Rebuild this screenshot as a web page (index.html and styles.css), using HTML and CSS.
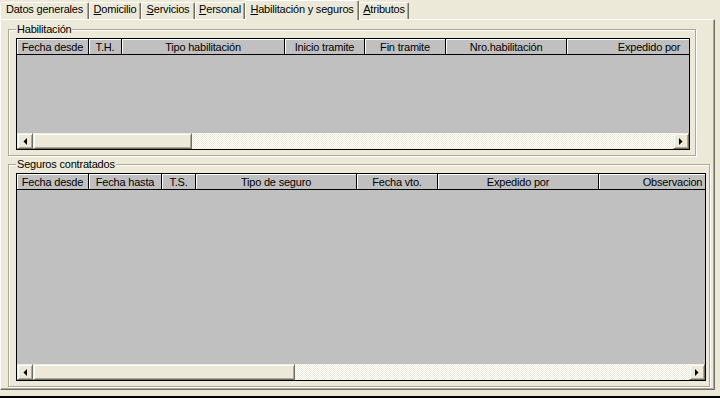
FILE: index.html
```html
<!DOCTYPE html>
<html lang="es">
<head>
    <meta charset="UTF-8">
    <title>Habilitación y seguros</title>
    <link rel="stylesheet" href="styles.css">
</head>
<body>
    <div class="window">
        <div class="tabs">
            <div class="tab tab-datos">Datos <u>g</u>enerales</div>
            <div class="tab tab-domicilio"><u>D</u>omicilio</div>
            <div class="tab tab-servicios"><u>S</u>ervicios</div>
            <div class="tab tab-personal"><u>P</u>ersonal</div>
            <div class="tab tab-habilitacion active"><u>H</u>abilitación y seguros</div>
            <div class="tab tab-atributos"><u>A</u>tributos</div>
        </div>

        <div class="panel">
            <!-- Habilitación -->
            <fieldset class="group group-hab">
                <legend>Habilitación</legend>
                <div class="grid grid-hab">
                    <div class="grid-head">
                        <div class="col">Fecha desde</div>
                        <div class="col">T.H.</div>
                        <div class="col">Tipo habilitación</div>
                        <div class="col">Inicio tramite</div>
                        <div class="col">Fin tramite</div>
                        <div class="col">Nro.habilitación</div>
                        <div class="col">Expedido por</div>
                    </div>
                    <div class="grid-body"></div>
                    <div class="hscroll">
                        <div class="sb-btn">
                            <svg width="4" height="7" viewBox="0 0 4 7"><polygon points="4,0 4,7 0.5,3.5" fill="#000"/></svg>
                        </div>
                        <div class="sb-thumb"></div>
                        <div class="sb-track"></div>
                        <div class="sb-btn">
                            <svg width="4" height="7" viewBox="0 0 4 7"><polygon points="0,0 0,7 3.5,3.5" fill="#000"/></svg>
                        </div>
                    </div>
                </div>
            </fieldset>

            <!-- Seguros contratados -->
            <fieldset class="group group-seg">
                <legend>Seguros contratados</legend>
                <div class="grid grid-seg">
                    <div class="grid-head">
                        <div class="col">Fecha desde</div>
                        <div class="col">Fecha hasta</div>
                        <div class="col">T.S.</div>
                        <div class="col">Tipo de seguro</div>
                        <div class="col">Fecha vto.</div>
                        <div class="col">Expedido por</div>
                        <div class="col">Observacion</div>
                    </div>
                    <div class="grid-body"></div>
                    <div class="hscroll">
                        <div class="sb-btn">
                            <svg width="4" height="7" viewBox="0 0 4 7"><polygon points="4,0 4,7 0.5,3.5" fill="#000"/></svg>
                        </div>
                        <div class="sb-thumb"></div>
                        <div class="sb-track"></div>
                        <div class="sb-btn">
                            <svg width="4" height="7" viewBox="0 0 4 7"><polygon points="0,0 0,7 3.5,3.5" fill="#000"/></svg>
                        </div>
                    </div>
                </div>
            </fieldset>
        </div>
    </div>
</body>
</html>
```

FILE: styles.css
```css
body {
    margin: 0;
    background-color: #ece9d8;
    font-family: "Liberation Sans", Arial, sans-serif;
    font-size: 11px;
    letter-spacing: -0.2px;
    color: #000;
}

.window {
    width: 720px;
    height: 398px;
    box-sizing: border-box;
    border-bottom: 2px solid #000;
    overflow: hidden;
}

/* tab strip */
.tabs {
    display: flex;
    align-items: flex-end;
    height: 19px;
    position: relative;
    z-index: 1;
}

.tab {
    box-sizing: border-box;
    height: 17px;
    line-height: 13px;
    text-align: center;
    white-space: nowrap;
    background-color: #ece9d8;
    border-top: 1px solid #fff;
    border-left: 1px solid #fff;
    border-right: 1px solid #716f64;
    box-shadow: inset -1px 0 0 #aca899;
    border-radius: 2px 2px 0 0;
}

.tab.active {
    height: 20px;
    margin-bottom: -1px;
    padding-top: 2px;
}

.tab-datos { width: 89px; }
.tab-domicilio { width: 52px; }
.tab-servicios { width: 54px; }
.tab-personal { width: 50px; }
.tab-habilitacion { width: 114px; }
.tab-atributos { width: 50px; }

/* tab page */
.panel {
    box-sizing: border-box;
    width: 715px;
    height: 371px;
    padding: 2px 0 0 7px;
    border-top: 1px solid #fff;
    border-left: 1px solid #fff;
    border-right: 1px solid #716f64;
    border-bottom: 1px solid #716f64;
    box-shadow: inset -1px -1px 0 #aca899;
}

.group {
    box-sizing: border-box;
    margin: 0;
    padding: 2px 0 5px 7px;
    min-inline-size: 0;
    border: 1px solid #aca899;
    box-shadow: inset 1px 1px 0 #fff, 1px 1px 0 #fff;
}

.group legend {
    padding: 0 1px;
    line-height: 14px;
    background-color: #ece9d8;
}

.group-hab { width: 688px; }

.group-seg {
    width: 702px;
    margin-top: 1px;
}

/* data grids */
.grid {
    box-sizing: border-box;
    display: flex;
    flex-direction: column;
    border: 1px solid #000;
    background-color: #c0c0c0;
    overflow: hidden;
}

.grid-hab {
    width: 674px;
    height: 112px;
}

.grid-seg {
    width: 690px;
    height: 208px;
}

.grid-head {
    display: grid;
    height: 16px;
    box-sizing: border-box;
    border-bottom: 1px solid #000;
}

.grid-hab .grid-head {
    grid-template-columns: 72px 33px 163px 80px 81px 121px 165px;
}

.grid-seg .grid-head {
    grid-template-columns: 72px 73px 34px 161px 81px 161px 148px;
}

.col {
    box-sizing: border-box;
    padding-top: 1px;
    line-height: 14px;
    text-align: center;
    white-space: nowrap;
    overflow: hidden;
    border-right: 1px solid #000;
    box-shadow: inset 1px 1px 0 #fff;
}

.grid-body {
    flex: 1;
}

/* horizontal scrollbar */
.hscroll {
    display: flex;
    height: 16px;
    flex-shrink: 0;
    background: repeating-conic-gradient(#fff 0 25%, #ece9d8 0 50%) 0 0 / 2px 2px;
}

.sb-btn,
.sb-thumb {
    box-sizing: border-box;
    height: 16px;
    background-color: #ece9d8;
    border: 1px solid;
    border-color: #f1efe2 #716f64 #716f64 #f1efe2;
    box-shadow: inset 1px 1px 0 #fff, inset -1px -1px 0 #aca899;
}

.sb-btn {
    width: 16px;
    display: flex;
    align-items: center;
    justify-content: center;
}

.sb-btn svg {
    display: block;
}

.grid-hab .sb-thumb { width: 159px; }
.grid-seg .sb-thumb { width: 262px; }

.sb-track {
    flex: 1;
}
```
